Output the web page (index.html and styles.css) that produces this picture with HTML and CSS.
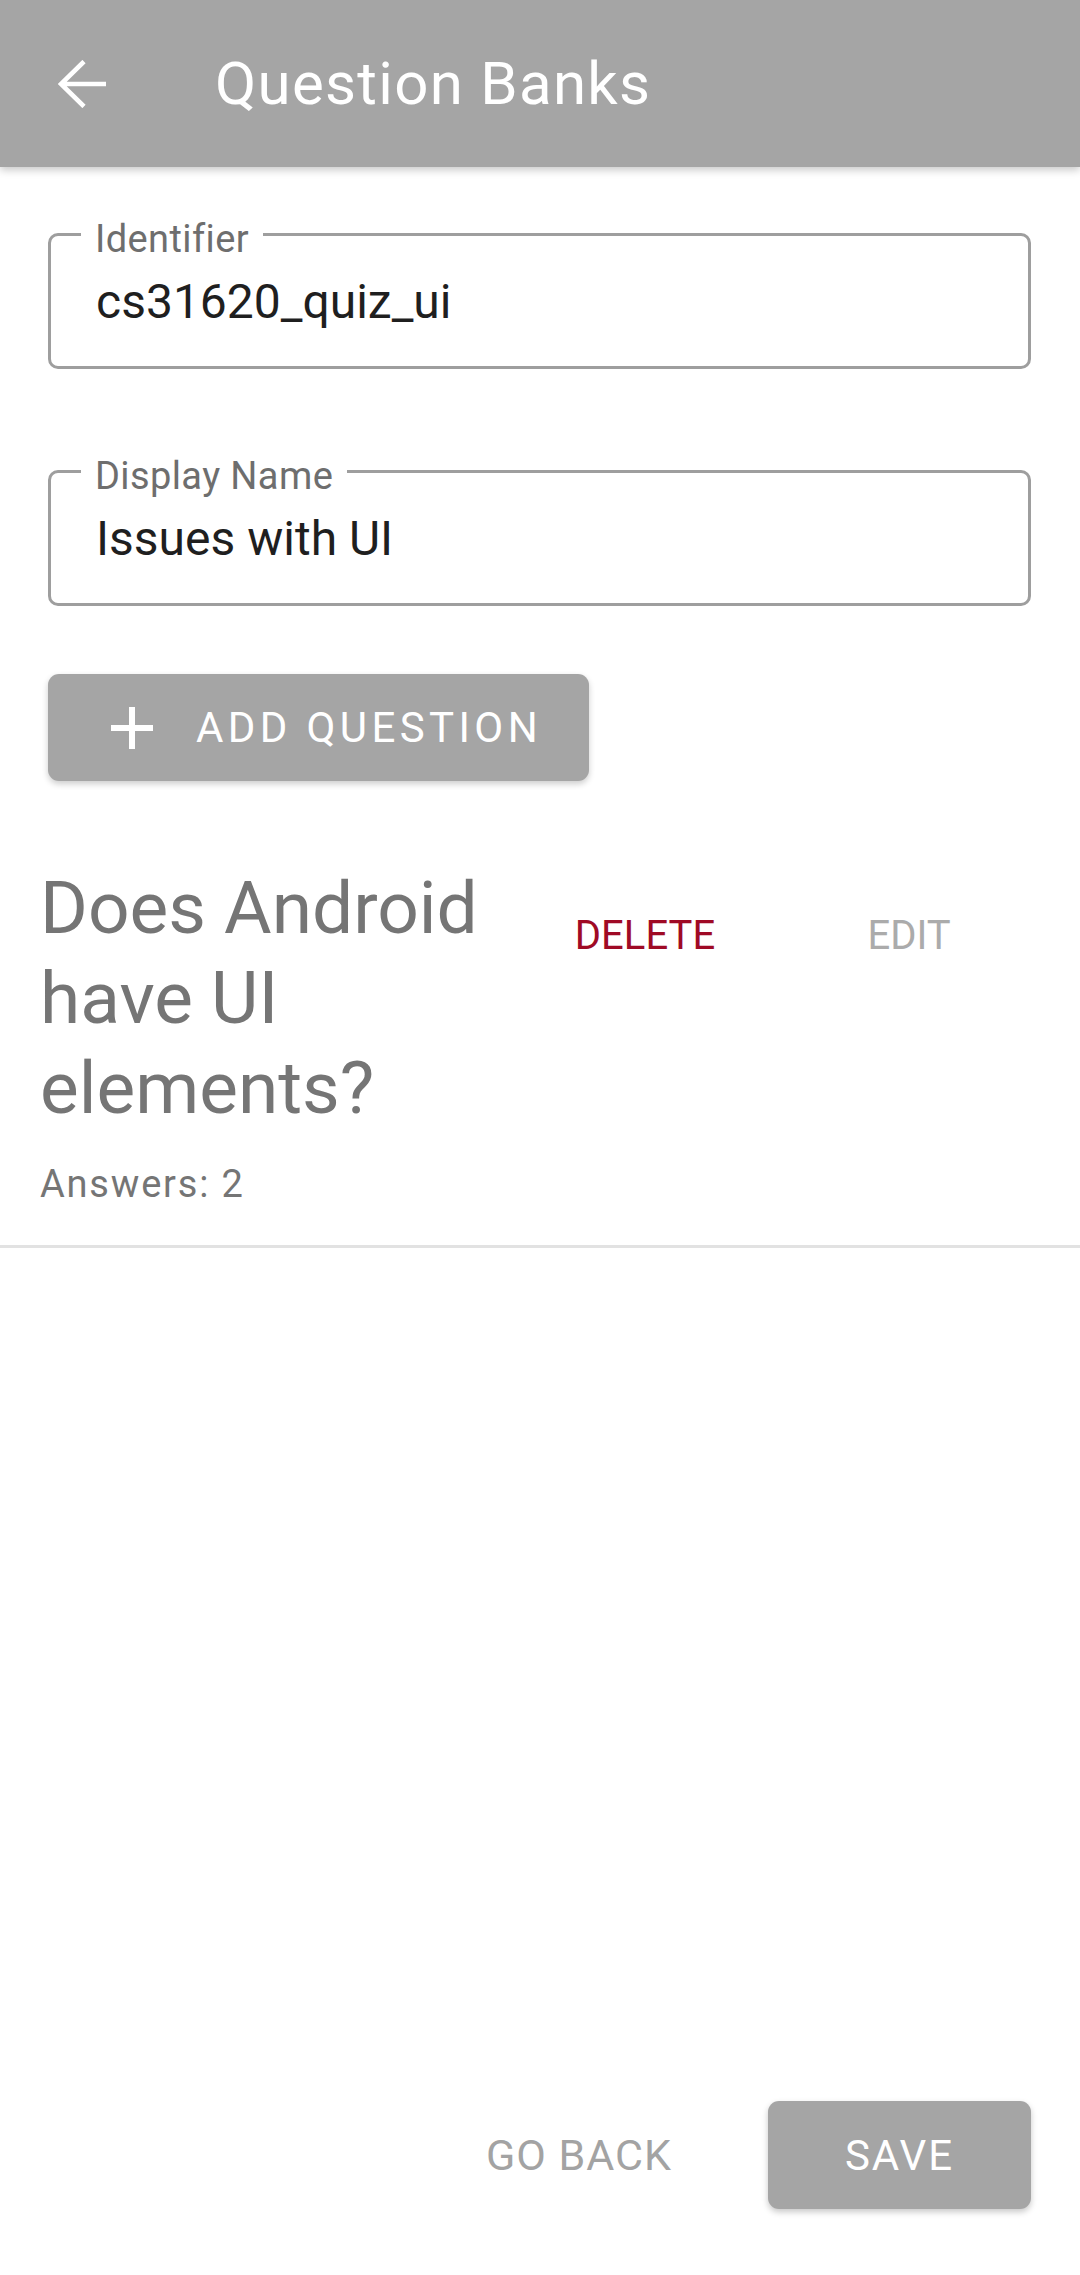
FILE: index.html
```html
<!DOCTYPE html>
<html lang="en">
<head>
<meta charset="utf-8">
<title>Question Banks</title>
<link rel="stylesheet" href="styles.css">
</head>
<body>
<header class="appbar">
  <svg class="back-icon" viewBox="0 0 48 48" width="48" height="48" aria-hidden="true">
    <path d="M3 24H48M26 1.5L3 24L26 46.5" fill="none" stroke="#fff" stroke-width="4.6"/>
  </svg>
  <h1 class="appbar-title">Question Banks</h1>
</header>
<main class="content">
  <div class="field field-first">
    <span class="field-label">Identifier</span>
    <div class="field-value">cs31620_quiz_ui</div>
  </div>
  <div class="field field-second">
    <span class="field-label">Display Name</span>
    <div class="field-value">Issues with UI</div>
  </div>
  <button class="add-btn" type="button">
    <svg class="plus-icon" viewBox="0 0 42 42" width="42" height="42" aria-hidden="true">
      <path d="M0 21H42M21 0V42" fill="none" stroke="#fff" stroke-width="6"/>
    </svg>
    <span class="add-text">ADD QUESTION</span>
  </button>
</main>
<section class="question-list">
  <div class="question-row">
    <div class="question-info">
      <div class="question-title">Does Android have UI elements?</div>
      <div class="question-answers">Answers: 2</div>
    </div>
    <button class="text-btn delete-btn" type="button">DELETE</button>
    <button class="text-btn edit-btn" type="button">EDIT</button>
  </div>
</section>
<div class="spacer"></div>
<footer class="actions">
  <button class="goback-btn" type="button">GO BACK</button>
  <button class="save-btn" type="button">SAVE</button>
</footer>
</body>
</html>
```
FILE: styles.css
```css
* { box-sizing: border-box; }
html, body { margin: 0; padding: 0; }
body {
  font-family: Roboto, "Noto Sans", "Liberation Sans", sans-serif;
  background: #ffffff;
  min-height: 2275px;
  display: flex;
  flex-direction: column;
}
button {
  font-family: inherit;
  border: none;
  background: none;
  padding: 0;
  margin: 0;
  cursor: pointer;
}
.appbar {
  height: 167px;
  background: #a5a5a5;
  display: flex;
  align-items: center;
  padding-left: 58px;
  box-shadow: 0 3px 8px rgba(0,0,0,0.22);
  position: relative;
  z-index: 2;
  flex-shrink: 0;
}
.back-icon { display: block; flex-shrink: 0; }
.appbar-title {
  margin: 0 0 0 109px;
  font-size: 60px;
  line-height: 68px;
  font-weight: 400;
  letter-spacing: 1.3px;
  color: #ffffff;
}
.content {
  padding: 0 49px 0 48px;
  display: flex;
  flex-direction: column;
  align-items: flex-start;
}
.field {
  position: relative;
  width: 100%;
  height: 136px;
  border: 3px solid #9e9e9e;
  border-radius: 10px;
  padding: 38px 0 0 45px;
}
.field-first { margin-top: 66px; }
.field-second { margin-top: 101px; }
.field-label {
  position: absolute;
  top: -16px;
  left: 30px;
  padding: 0 14px;
  background: #ffffff;
  font-size: 38px;
  line-height: 38px;
  letter-spacing: 0.4px;
  color: #6e6e6e;
}
.field-value {
  font-size: 48px;
  line-height: 56px;
  color: #1f1f1f;
}
.add-btn {
  margin-top: 68px;
  height: 107px;
  width: 541px;
  background: #a5a5a5;
  border-radius: 11px;
  box-shadow: 0 3px 6px rgba(0,0,0,0.2);
  display: flex;
  align-items: center;
  padding-left: 63px;
}
.plus-icon { display: block; flex-shrink: 0; }
.add-text {
  margin-left: 43px;
  font-size: 42px;
  line-height: 49px;
  letter-spacing: 4.4px;
  color: #ffffff;
  white-space: nowrap;
}
.question-list {
  margin-top: 82px;
  border-bottom: 3px solid #e2e2e2;
}
.question-row {
  display: flex;
  align-items: flex-start;
  padding: 0 0 40px 40px;
}
.question-info { width: 500px; flex-shrink: 0; }
.question-title {
  font-size: 73px;
  line-height: 90px;
  color: #757575;
}
.question-answers {
  margin-top: 30px;
  font-size: 38px;
  line-height: 42px;
  letter-spacing: 1.8px;
  color: #757575;
}
.text-btn {
  margin-top: 48px;
  font-size: 40px;
  line-height: 49px;
  text-align: center;
}
.delete-btn {
  width: 210px;
  color: #9f0a25;
}
.edit-btn {
  width: 318px;
  color: #ababab;
}
.spacer { flex: 1; }
.actions {
  display: flex;
  justify-content: flex-end;
  align-items: center;
  padding: 0 49px 66px 0;
}
.goback-btn {
  margin-right: 96px;
  font-size: 43px;
  line-height: 50px;
  letter-spacing: 1px;
  color: #a3a3a3;
}
.save-btn {
  width: 263px;
  height: 108px;
  background: #a5a5a5;
  border-radius: 11px;
  box-shadow: 0 3px 6px rgba(0,0,0,0.22);
  font-size: 42px;
  line-height: 49px;
  letter-spacing: 2px;
  color: #ffffff;
}
```
